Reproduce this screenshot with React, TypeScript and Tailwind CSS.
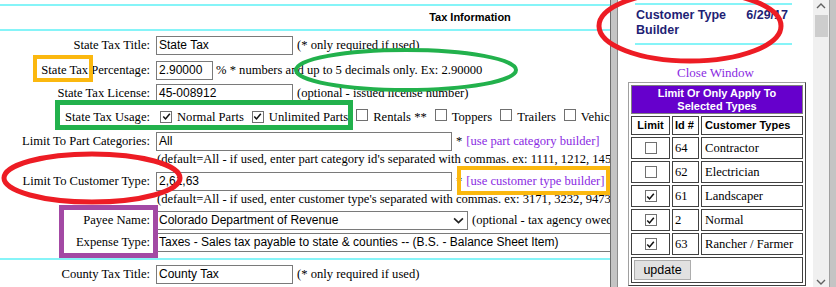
import type { ReactNode } from 'react';

const serif = "font-['Liberation_Serif','Times_New_Roman',serif]";
const sans = "font-['Liberation_Sans',Arial,sans-serif]";

function Box({ checked }: { checked?: boolean }) {
  return (
    <span className="inline-flex h-[12px] w-[12px] shrink-0 items-center justify-center border border-[#707070] bg-white">
      {checked && (
        <svg viewBox="0 0 10 10" className="h-[9px] w-[9px]">
          <path d="M1.4 5.1 L3.9 7.7 L8.7 1.9" stroke="#111" strokeWidth="1.7" fill="none" />
        </svg>
      )}
    </span>
  );
}

function Field({ value, width }: { value: string; width: string }) {
  return (
    <div className={`${width} ${sans} h-[19px] shrink-0 overflow-hidden whitespace-nowrap border border-[#7a7a7a] pl-[2px] text-[12px] leading-[17px]`}>
      {value}
    </div>
  );
}

function Select({ value, width }: { value: string; width: string }) {
  return (
    <div className={`${width} ${sans} flex h-[19px] shrink-0 items-center justify-between border border-[#7a7a7a] pl-[2px] pr-[3px] text-[12px]`}>
      <span className="whitespace-nowrap">{value}</span>
      <svg viewBox="0 0 10 6" className="h-[7px] w-[11px]">
        <path d="M1 1 L5 5 L9 1" stroke="#222" strokeWidth="1.5" fill="none" />
      </svg>
    </div>
  );
}

function Row({ label, className, children }: { label: string; className: string; children: ReactNode }) {
  return (
    <div className={`flex items-center ${className}`}>
      <div className="w-[150px] shrink-0 text-right whitespace-nowrap">{label}</div>
      <div className="ml-[6px] flex items-center whitespace-nowrap">{children}</div>
    </div>
  );
}

function Usage({ label, checked }: { label: string; checked?: boolean }) {
  return (
    <span className="mr-[4px] flex items-center">
      <span className="ml-[4px]">
        <Box checked={checked} />
      </span>
      <span className="ml-[5px]">{label}</span>
    </span>
  );
}

const types = [
  { id: '64', name: 'Contractor', on: false },
  { id: '62', name: 'Electrician', on: false },
  { id: '61', name: 'Landscaper', on: true },
  { id: '2', name: 'Normal', on: true },
  { id: '63', name: 'Rancher / Farmer', on: true }
];

export default function App() {
  return (
    <div className={`relative h-[287px] w-[836px] overflow-hidden bg-white text-black ${serif} text-[12.6px]`}>
      <div className="w-[940px]">
        <div className="mt-[4px] h-[2px] bg-[#86f4f8]" />
        <div className={`${sans} flex h-[23px] items-center justify-center text-[11px] font-bold`}>Tax Information</div>
        <div className="h-[2px] bg-[#86f4f8]" />

        <Row label="State Tax Title:" className="h-[28px]">
          <Field value="State Tax" width="w-[137px]" />
          <span className="ml-[4px]">(* only required if used)</span>
        </Row>
        <Row label="State Tax Percentage:" className="h-[22px]">
          <Field value="2.90000" width="w-[57px]" />
          <span className="ml-[3px]">% * numbers and up to 5 decimals only. Ex: 2.90000</span>
        </Row>
        <Row label="State Tax License:" className="h-[24px]">
          <Field value="45-008912" width="w-[137px]" />
          <span className="ml-[4px]">(optional - issued license number)</span>
        </Row>
        <Row label="State Tax Usage:" className="h-[25px]">
          <Usage label="Normal Parts" checked />
          <Usage label="Unlimited Parts" checked />
          <Usage label="Rentals **" />
          <Usage label="Toppers" />
          <Usage label="Trailers" />
          <Usage label="Vehicles" />
        </Row>
        <Row label="Limit To Part Categories:" className="h-[22px]">
          <Field value="All" width="w-[296px]" />
          <span className="ml-[4px]">*</span>
          <span className="ml-[4px] text-[#8a2be2]">[use part category builder]</span>
        </Row>
        <div className="ml-[157px] flex h-[14px] items-center whitespace-nowrap">
          (default=All - if used, enter part category id's separated with commas. ex: 1111, 1212, 1456)
        </div>
        <Row label="Limit To Customer Type:" className="mt-[4px] h-[22px]">
          <Field value="2,61,63" width="w-[296px]" />
          <span className="ml-[4px]">*</span>
          <span className="ml-[4px] text-[#8a2be2]">[use customer type builder]</span>
        </Row>
        <div className="ml-[157px] flex h-[14px] items-center whitespace-nowrap">
          (default=All - if used, enter customer type's separated with commas. ex: 3171, 3232, 9473)
        </div>
        <Row label="Payee Name:" className="mt-[3px] h-[22px]">
          <Select value="Colorado Department of Revenue" width="w-[312px]" />
          <span className="ml-[4px]">(optional - tax agency owed)</span>
        </Row>
        <Row label="Expense Type:" className="h-[22px]">
          <Select value="Taxes - Sales tax payable to state & counties -- (B.S. - Balance Sheet Item)" width="w-[520px]" />
        </Row>
        <div className="mt-[5px] h-[2px] bg-[#86f4f8]" />
        <Row label="County Tax Title:" className="mt-[3px] h-[22px]">
          <Field value="County Tax" width="w-[137px]" />
          <span className="ml-[4px]">(* only required if used)</span>
        </Row>
      </div>

      {/* popup window */}
      <div className="absolute left-[610px] top-0 flex h-[287px] w-[226px]">
        <div className="w-[1px] bg-[#6d6d6d]" />
        <div className="w-[6px] bg-[#c4c4c4]" />
        <div className="w-[1px] bg-[#8c8c8c]" />
        <div className="w-[195px] bg-white">
          <div className="ml-[17px] mt-[3px] h-[2px] w-[157px] bg-[#86f4f8]" />
          <div className={`${sans} ml-[18px] mt-[3px] flex w-[152px] justify-between text-[12.5px] font-bold leading-[15px] text-[#1f1f75]`}>
            <span>
              Customer Type
              <br />
              Builder
            </span>
            <span>6/29/17</span>
          </div>
          <div className="ml-[17px] mt-[5px] h-[2px] w-[157px] bg-[#86f4f8]" />
          <div className="mt-[20px] text-center text-[13px] leading-[16px] text-[#8a2be2]">Close Window</div>
          <div className="ml-[10px] mt-[1px] w-[178px] border border-b-[#404040] border-l-[#a0a0a0] border-r-[#404040] border-t-[#a0a0a0] p-[2px]">
            <div className="grid grid-cols-[39px_27px_102px] gap-[2px]">
              <div className={`${sans} col-span-3 flex h-[29px] items-center justify-center border border-[#808080] bg-[#6600cc] text-center text-[11px] font-bold leading-[13px] text-white`}>
                Limit Or Only Apply To
                <br />
                Selected Types
              </div>
              <div className={`${sans} flex h-[19px] items-center justify-center border border-[#404040] text-[11px] font-bold`}>Limit</div>
              <div className={`${sans} flex h-[19px] items-center border border-[#404040] pl-[2px] text-[11px] font-bold`}>Id #</div>
              <div className={`${sans} flex h-[19px] items-center border border-[#404040] pl-[3px] text-[11px] font-bold`}>Customer Types</div>
              {types.map((t) => (
                <div key={t.id} className="contents">
                  <div className="flex h-[22px] items-center justify-center border border-[#404040]">
                    <Box checked={t.on} />
                  </div>
                  <div className="flex h-[22px] items-center border border-[#404040] pl-[2px]">{t.id}</div>
                  <div className="flex h-[22px] items-center whitespace-nowrap border border-[#404040] pl-[3px]">{t.name}</div>
                </div>
              ))}
              <div className="col-span-3 flex h-[26px] items-center border border-[#404040] pl-[2px]">
                <div className={`${sans} flex h-[20px] w-[57px] items-center justify-center border border-[#adadad] bg-[#e1e1e1] text-[12.5px]`}>
                  update
                </div>
              </div>
            </div>
          </div>
        </div>
        <div className="relative w-[16px] bg-[#f0f0f0]">
          <svg viewBox="0 0 10 6" className="absolute left-[3px] top-[3px] h-[6px] w-[10px]">
            <path d="M1 5 L5 1 L9 5" stroke="#606060" strokeWidth="1.4" fill="none" />
          </svg>
          <div className="absolute left-[2px] top-[15px] h-[22px] w-[13px] bg-[#cdcdcd]" />
          <svg viewBox="0 0 10 6" className="absolute bottom-[2px] left-[3px] h-[6px] w-[10px]">
            <path d="M1 1 L5 5 L9 1" stroke="#606060" strokeWidth="1.4" fill="none" />
          </svg>
        </div>
        <div className="w-[7px] border-l border-[#a0a0a0] bg-[#c4c4c4]" />
      </div>

      {/* annotations */}
      <svg className="pointer-events-none absolute left-0 top-0" width="836" height="287" viewBox="0 0 836 287">
        <ellipse cx="406" cy="70" rx="110" ry="20" fill="none" stroke="#22b14c" strokeWidth="4" />
        <ellipse cx="92" cy="178" rx="88" ry="24" fill="none" stroke="#ed1c24" strokeWidth="5" />
        <ellipse cx="690" cy="26" rx="91" ry="35" fill="none" stroke="#ed1c24" strokeWidth="5" />
        <rect x="35" y="57" width="56" height="23" fill="none" stroke="#fbb80f" strokeWidth="4" />
        <rect x="57.5" y="102.5" width="293" height="25" fill="none" stroke="#22b14c" strokeWidth="5" />
        <rect x="459" y="168" width="149" height="25" fill="none" stroke="#fbb80f" strokeWidth="4" />
        <rect x="61.5" y="207.5" width="94" height="48" fill="none" stroke="#a349a4" strokeWidth="5" />
      </svg>
    </div>
  );
}
